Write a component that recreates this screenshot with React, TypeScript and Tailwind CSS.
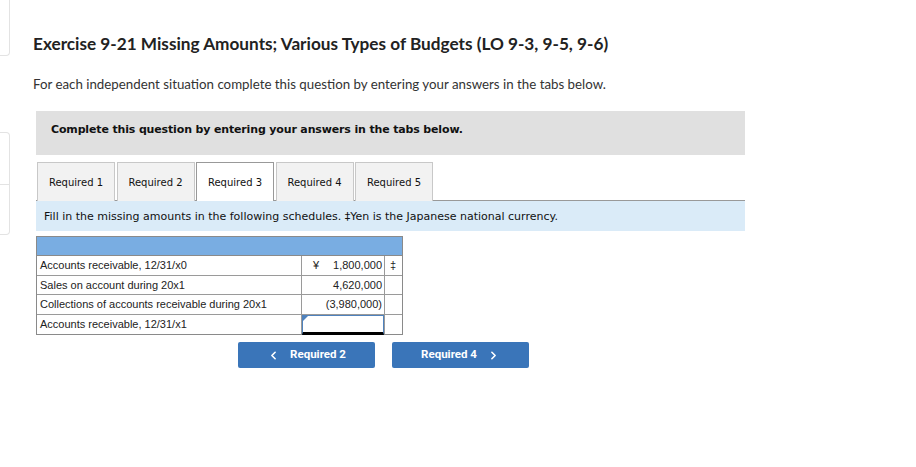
import React from "react";
import { ChevronLeft, ChevronRight } from "lucide-react";

const tabs = ["Required 1", "Required 2", "Required 3", "Required 4", "Required 5"];

export default function App() {
  return (
    <div className="flex w-[916px] h-[467px] bg-white overflow-hidden">
      {/* left cropped sidebar cards */}
      <div className="w-[10px] shrink-0 flex flex-col">
        <div className="h-[56px] border-r border-b border-[#e3e3e3] rounded-br-[4px]" />
        <div className="h-[76px]" />
        <div className="h-[103px] border-r border-t border-b border-[#e3e3e3] rounded-r-[4px] flex flex-col">
          <div className="h-[52px] border-b border-[#e3e3e3]" />
        </div>
      </div>

      <div className="pl-[26px] w-[735px] flex flex-col">
        <h1 className="mt-[34px] -ml-[3px] h-[20px] leading-[20px] text-[17.2px] font-bold text-[#222] font-['Lato','Open_Sans',sans-serif]">
          Exercise 9-21 Missing Amounts; Various Types of Budgets (LO 9-3, 9-5, 9-6)
        </h1>
        <p className="mt-[22px] -ml-[3px] h-[16px] leading-[16px] text-[13.3px] text-[#333] font-['Lato','Open_Sans',sans-serif]">
          For each independent situation complete this question by entering your answers in the tabs below.
        </p>

        <div className="mt-[19px] h-[44px] w-[709px] bg-[#e0e0e0] flex items-center pl-[15px]">
          <span className="text-[11px] font-bold text-[#111] font-['DejaVu_Sans',Verdana,sans-serif] tracking-[-0.15px] -mt-[6px]">
            Complete this question by entering your answers in the tabs below.
          </span>
        </div>

        <div className="mt-[7px] w-[709px] flex gap-[1.5px] pl-[1px] h-[39px] border-b border-[#999] font-['DejaVu_Sans',Verdana,sans-serif]">
          {tabs.map((t, i) =>
            i === 2 ? (
              <div
                key={t}
                className="w-[78px] h-[40px] -mb-px bg-white border border-b-0 border-[#999] flex items-center justify-center text-[10px] text-[#111]"
              >
                {t}
              </div>
            ) : (
              <div
                key={t}
                className="w-[78px] h-[39px] bg-[#f2f2f2] border border-b-0 border-[#c8c8c8] flex items-center justify-center text-[10px] text-[#111]"
              >
                {t}
              </div>
            )
          )}
        </div>

        <div className="w-[709px] h-[30px] bg-[#daebf8] flex items-center pl-[8px] pt-[2px] text-[11px] text-[#111] font-['DejaVu_Sans',Verdana,sans-serif]">
          Fill in the missing amounts in the following schedules. ‡Yen is the Japanese national currency.
        </div>

        <div className="mt-[5px] w-[367px] border border-[#8a8a8a] font-['Liberation_Sans',Arial,sans-serif] text-[11px] text-[#222]">
          <div className="h-[19px] bg-[#79ade2] border-b border-[#8a8a8a]" />
          {[
            { label: "Accounts receivable, 12/31/x0", yen: true, value: "1,800,000", mark: "‡" },
            { label: "Sales on account during 20x1", value: "4,620,000" },
            { label: "Collections of accounts receivable during 20x1", value: "(3,980,000)" },
            { label: "Accounts receivable, 12/31/x1", input: true },
          ].map((r, i) => (
            <div
              key={i}
              className={`flex h-[19.5px] ${i < 3 ? "border-b border-[#9a9a9a]" : ""}`}
            >
              <div className="w-[265px] border-r border-[#9a9a9a] flex items-center pl-[3px]">
                {r.label}
              </div>
              <div className="w-[83px] border-r border-[#9a9a9a] flex items-center pr-[2px] relative">
                {r.input ? (
                  <div className="absolute left-0 top-0 right-0 bottom-[-1px] border border-[#4f82bd] border-b-[3px] border-b-black bg-white">
                    <div className="absolute left-0 top-0 w-0 h-0 border-t-[5px] border-t-[#4f82bd] border-r-[5px] border-r-transparent" />
                  </div>
                ) : (
                  <>
                    {r.yen ? <span className="pl-[11px]">¥</span> : null}
                    <span className="ml-auto">{r.value}</span>
                  </>
                )}
              </div>
              <div className="flex-1 flex items-center pl-[5px]">{r.mark ?? ""}</div>
            </div>
          ))}
        </div>

        <div className="mt-[7px] ml-[202px] flex gap-[17px] font-['Roboto','Liberation_Sans',sans-serif]">
          <button className="w-[137px] h-[26px] bg-[#3a75b9] rounded-[2px] text-white text-[11.5px] font-bold flex items-center justify-center gap-[10px]">
            <ChevronLeft size={13} strokeWidth={3} />
            <span>Required 2</span>
          </button>
          <button className="w-[137px] h-[26px] bg-[#3a75b9] rounded-[2px] text-white text-[11.5px] font-bold flex items-center justify-center gap-[10px]">
            <span>Required 4</span>
            <ChevronRight size={13} strokeWidth={3} />
          </button>
        </div>
      </div>
    </div>
  );
}
